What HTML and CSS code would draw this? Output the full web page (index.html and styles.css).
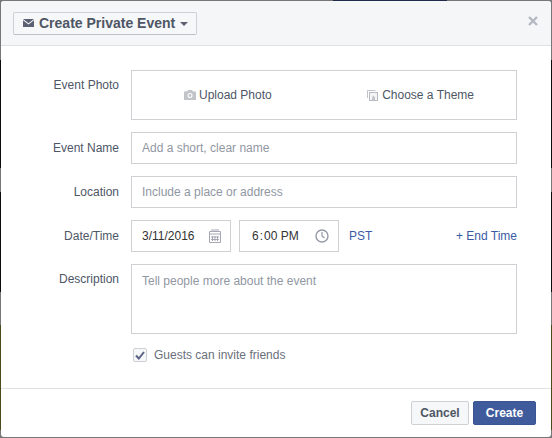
FILE: index.html
```html
<!DOCTYPE html>
<html lang="en">
<head>
    <meta charset="UTF-8">
    <meta name="viewport" content="width=device-width, initial-scale=1.0">
    <title>Create Private Event</title>
    <link rel="stylesheet" href="styles.css">
</head>
<body>

<div class="dialog">
    <div class="dialog-head">
        <button class="type-btn">
            <svg class="mail-icon" width="11" height="8" viewBox="0 0 11 8"><path d="M0 0h11L5.500 4.200z" fill="#5b6072"/><path d="M0 1.300V8h11V1.300L5.500 5.500z" fill="#5b6072"/></svg>
            Create Private Event
            <span class="caret"></span>
        </button>
        <svg class="close" width="10" height="10" viewBox="0 0 10 10"><path d="M1 1l8 8M9 1l-8 8" stroke="#b4b8c2" stroke-width="2.400"/></svg>
    </div>

    <div class="dialog-body">
        <div class="row">
            <label class="row-label label-top">Event Photo</label>
            <div class="photo-box">
                <span class="photo-opt">
                    <svg width="12" height="10" viewBox="0 0 12 10"><path fill-rule="evenodd" d="M0 1.500h3L4 0h4l1 1.500h3V10H0zM6 3a2.500 2.500 0 1 0 0 5 2.500 2.500 0 0 0 0-5z" fill="#c2c4ca"/><circle cx="6" cy="5.500" r="1.400" fill="#c2c4ca"/></svg>
                    Upload Photo
                </span>
                <span class="photo-opt theme-opt">
                    <svg width="11" height="11" viewBox="0 0 11 11"><path d="M.5 8V.5h8" fill="none" stroke="#c2c4ca"/><rect x="2.500" y="2.500" width="8" height="8" fill="#f4f4f6" stroke="#b8bac2"/><path d="M5 10V7.500l1.500-2 1.500 2V10z" fill="#c2c4ca"/></svg>
                    Choose a Theme
                </span>
            </div>
        </div>
        <div class="row">
            <label class="row-label">Event Name</label>
            <input class="field" type="text" placeholder="Add a short, clear name">
        </div>
        <div class="row">
            <label class="row-label">Location</label>
            <input class="field" type="text" placeholder="Include a place or address">
        </div>
        <div class="row">
            <label class="row-label">Date/Time</label>
            <div class="date-row">
                <div class="picker">
                    <span>3/11/2016</span>
                    <svg width="12" height="14" viewBox="0 0 12 14"><path d="M.5 2.500h11v11H.5zM.5 5h11M3.500 7v5M6 7v5M8.500 7v5M2 8h8M2 10.500h8M3 0v2M5 0v2M7 0v2M9 0v2" fill="none" stroke="#a6a9b4"/></svg>
                </div>
                <div class="picker time-picker">
                    <span class="time">6<span class="colon">:</span>00 PM</span>
                    <svg width="14" height="14" viewBox="0 0 14 14"><circle cx="7" cy="7" r="6" fill="none" stroke="#969aa6" stroke-width="1.400"/><path d="M7 3v4l2.500 2" fill="none" stroke="#969aa6" stroke-width="1.200"/></svg>
                </div>
                <a class="link tz">PST</a>
                <a class="link end-time">+ End Time</a>
            </div>
        </div>
        <div class="row">
            <label class="row-label label-top">Description</label>
            <textarea class="field desc" placeholder="Tell people more about the event"></textarea>
        </div>
        <div class="row guests-row">
            <span class="check">
                <svg width="10" height="9" viewBox="0 0 10 9"><path d="M1 4.500l2.800 3L9 1" fill="none" stroke="#5b6284" stroke-width="2"/></svg>
            </span>
            <span class="guests">Guests can invite friends</span>
        </div>
    </div>

    <div class="dialog-foot">
        <button class="btn cancel">Cancel</button>
        <button class="btn primary">Create</button>
    </div>
</div>

</body>
</html>
```

FILE: styles.css
```css
/* Basic styling */
* {
    box-sizing: border-box;
}
html, body {
    height: 100%;
}
body {
    margin: 0;
    padding: 1px;
    /* the page behind the dialog only shows as a thin edge */
    background-color: #6f6f6f;
    background-image:
        linear-gradient(90deg, #777 333px, #1f2a4d 333px, #1f2a4d 447px, #777 447px),
        linear-gradient(#777 60px, #0c0c0e 60px, #0c0c0e 168px, #777 168px, #777 192px, #0c0c0e 192px, #0c0c0e 292px, #777 292px, #777 325px, #4a4a1c 325px, #4a4a1c 430px, #777 430px);
    background-size: 100% 1px, 100% 100%;
    background-repeat: no-repeat;
    font-family: "Liberation Sans", Arial, sans-serif;
    font-size: 12px;
    color: #4e5665;
    overflow: hidden;
}
.dialog {
    height: 436px;
    background-color: #fff;
    border-radius: 3px;
    display: flex;
    flex-direction: column;
}
.dialog-head {
    height: 45px;
    padding: 0 13px 0 12px;
    display: flex;
    align-items: center;
    justify-content: space-between;
    background-color: #f5f6f8;
    border-bottom: 1px solid #e0e1e4;
    border-radius: 3px 3px 0 0;
}
.type-btn {
    height: 23px;
    margin-top: 1px;
    padding: 0 8px 1px 9px;
    display: flex;
    align-items: center;
    background-color: #f6f7f9;
    border: 1px solid #ced0d4;
    border-bottom-color: #bdc0c6;
    border-radius: 2px;
    font-family: inherit;
    font-size: 14px;
    font-weight: bold;
    color: #4e5665;
}
.mail-icon {
    margin-right: 5px;
}
.caret {
    margin: 1px 0 0 5px;
    border-left: 4px solid transparent;
    border-right: 4px solid transparent;
    border-top: 4px solid #5b6072;
}
.close {
    margin-bottom: 4px;
}
.dialog-body {
    flex: 1;
    padding: 24px 34px 0 0;
}
.row {
    display: flex;
    align-items: center;
    margin-bottom: 12px;
}
.row-label {
    width: 118px;
    margin-right: 12px;
    text-align: right;
    color: #4e5665;
}
.label-top {
    align-self: flex-start;
    padding-top: 8px;
}
.photo-box {
    width: 386px;
    height: 50px;
    padding: 0 42px 0 52px;
    display: flex;
    align-items: center;
    justify-content: space-between;
    border: 1px solid #ced0d4;
}
.photo-opt {
    display: flex;
    align-items: center;
    gap: 3px;
}
.theme-opt {
    gap: 4px;
}
.field {
    width: 386px;
    height: 32px;
    padding: 0 10px;
    border: 1px solid #ced0d4;
    border-radius: 0;
    font-family: inherit;
    font-size: 12px;
    color: #333;
}
.field::placeholder {
    color: #9197a3;
    opacity: 1;
}
.date-row {
    width: 386px;
    display: flex;
    align-items: center;
}
.picker {
    width: 100px;
    height: 32px;
    margin-right: 8px;
    padding: 0 9px 0 10px;
    display: flex;
    align-items: center;
    justify-content: space-between;
    border: 1px solid #ced0d4;
    color: #333;
}
.time-picker {
    padding-left: 12px;
}
.colon {
    margin: 0 1px;
}
.link {
    color: #3b5ba5;
}
.tz {
    margin-left: 2px;
}
.end-time {
    margin-left: auto;
}
.desc {
    height: 70px;
    padding: 9px 10px;
    resize: none;
    display: block;
}
.guests-row {
    margin: 14px 0 0 132px;
}
.check {
    width: 14px;
    height: 14px;
    margin-right: 7px;
    display: flex;
    align-items: center;
    justify-content: center;
    background-color: #f6f7f9;
    border: 1px solid #ced0d4;
    border-radius: 2px;
}
.guests {
    color: #6a6f7b;
}
.dialog-foot {
    height: 49px;
    padding: 0 15px 0 0;
    display: flex;
    align-items: center;
    justify-content: flex-end;
    gap: 4px;
    border-top: 1px solid #e0e1e4;
}
.btn {
    height: 24px;
    padding: 0;
    background-color: #f6f7f9;
    border: 1px solid #ced0d4;
    border-radius: 2px;
    font-family: inherit;
    font-size: 12px;
    font-weight: bold;
    color: #4e5665;
}
.btn.cancel {
    width: 58px;
}
.btn.primary {
    width: 63px;
    background-color: #3f5b9c;
    border-color: #3b5592;
    color: #fff;
}
```
